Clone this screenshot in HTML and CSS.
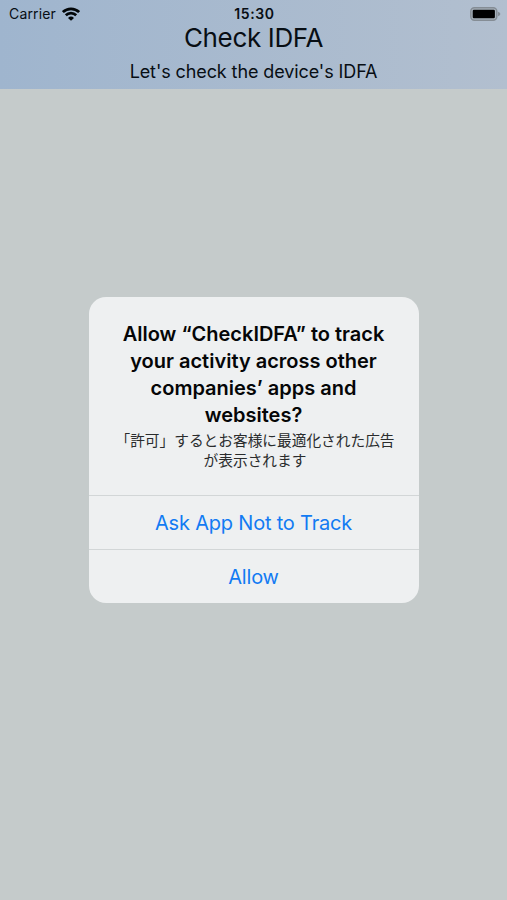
FILE: index.html
```html
<!DOCTYPE html>
<html lang="en">

<head>
    <meta charset="UTF-8">
    <meta name="viewport" content="width=device-width, initial-scale=1.0">
    <title>Check IDFA</title>
    <link rel="stylesheet" href="styles.css">
</head>

<body>
    <div class="screen">
        <header class="header">
            <!-- Status bar -->
            <div class="status-bar">
                <div class="status-left">
                    <span class="carrier">Carrier</span>
                    <svg class="wifi" width="18" height="14" viewBox="0 0 18 14">
                        <g fill="none" stroke="#020608" stroke-width="2.7">
                            <path d="M0.9 5.1 A11.6 11.6 0 0 1 17.1 5.1" />
                            <path d="M3.8 8.3 A7.4 7.4 0 0 1 14.2 8.3" />
                        </g>
                        <path fill="#020608" d="M9 13.7 L6 10.9 A4.3 4.3 0 0 1 12 10.9 Z" />
                    </svg>
                </div>
                <span class="time">15:30</span>
                <div class="status-right">
                    <svg class="battery" width="31" height="14" viewBox="0 0 31 14">
                        <rect x="0.8" y="0.8" width="26" height="12.4" rx="3.6" fill="#a9b3bd" stroke="#858d95" stroke-width="1.5" />
                        <rect x="2.7" y="2.7" width="22.2" height="8.6" rx="1.2" fill="#000" />
                        <path d="M28 4.7 Q30.4 5.6 30.4 7 Q30.4 8.4 28 9.3 Z" fill="#858d95" />
                    </svg>
                </div>
            </div>
            <h1>Check IDFA</h1>
            <p class="subtitle">Let's check the device's IDFA</p>
        </header>
        <main class="content">
            <!-- Tracking permission alert -->
            <div class="alert" role="alertdialog">
                <div class="alert-body">
                    <h2>Allow “CheckIDFA” to track<br>your activity across other<br>companies’ apps and<br>websites?</h2>
                    <p class="alert-message" lang="ja">「許可」するとお客様に最適化された広告<br>が表示されます</p>
                </div>
                <button class="alert-button">Ask App Not to Track</button>
                <button class="alert-button">Allow</button>
            </div>
        </main>
    </div>
</body>

</html>
```
FILE: styles.css
```css
* {
    box-sizing: border-box;
}

body {
    margin: 0;
    background-color: #c5cbcb;
    font-family: Inter, "Liberation Sans", "Noto Sans CJK JP", sans-serif;
    color: #080e14;
}

.screen {
    height: 900px;
    display: flex;
    flex-direction: column;
}

.header {
    height: 89px;
    background: linear-gradient(to right, #9fb5ce, #b2bfcf);
    text-align: center;
}

.status-bar {
    height: 26px;
    display: grid;
    grid-template-columns: 1fr auto 1fr;
    align-items: center;
    padding: 1px 6px 0 8px;
    font-size: 14px;
}

.status-left {
    display: flex;
    align-items: center;
    gap: 6px;
}

.status-right {
    display: flex;
    justify-content: flex-end;
}

.carrier {
    margin-left: 1px;
    letter-spacing: 0.15px;
}

.time {
    font-weight: 600;
    letter-spacing: 0.6px;
}

.wifi,
.battery {
    display: block;
}

h1 {
    margin: -4px 0 0;
    font-size: 26px;
    font-weight: 400;
    line-height: 32px;
    letter-spacing: -0.35px;
}

.subtitle {
    margin: 7px 0 0;
    font-size: 18px;
    line-height: 22px;
    letter-spacing: -0.1px;
}

.content {
    flex: 1;
    display: flex;
    justify-content: center;
    align-items: flex-start;
    padding-top: 208px;
}

.alert {
    width: 330px;
    background-color: #eef0f1;
    border-radius: 17px;
    overflow: hidden;
    text-align: center;
}

.alert-body {
    height: 198px;
    padding-top: 24px;
}

h2 {
    margin: 0;
    color: #050607;
    font-size: 20px;
    font-weight: 600;
    line-height: 27px;
}

.alert-message {
    margin: 1px 0 0;
    padding-left: 3px;
    color: #2a2c2d;
    font-family: "Noto Sans CJK JP", sans-serif;
    font-size: 14.7px;
    line-height: 20px;
}

.alert-button {
    display: block;
    width: 100%;
    height: 54px;
    padding: 0;
    border: none;
    border-top: 1px solid #d2d6d7;
    background: none;
    color: #127bf3;
    font-family: inherit;
    font-size: 20px;
    letter-spacing: -0.2px;
}
```
